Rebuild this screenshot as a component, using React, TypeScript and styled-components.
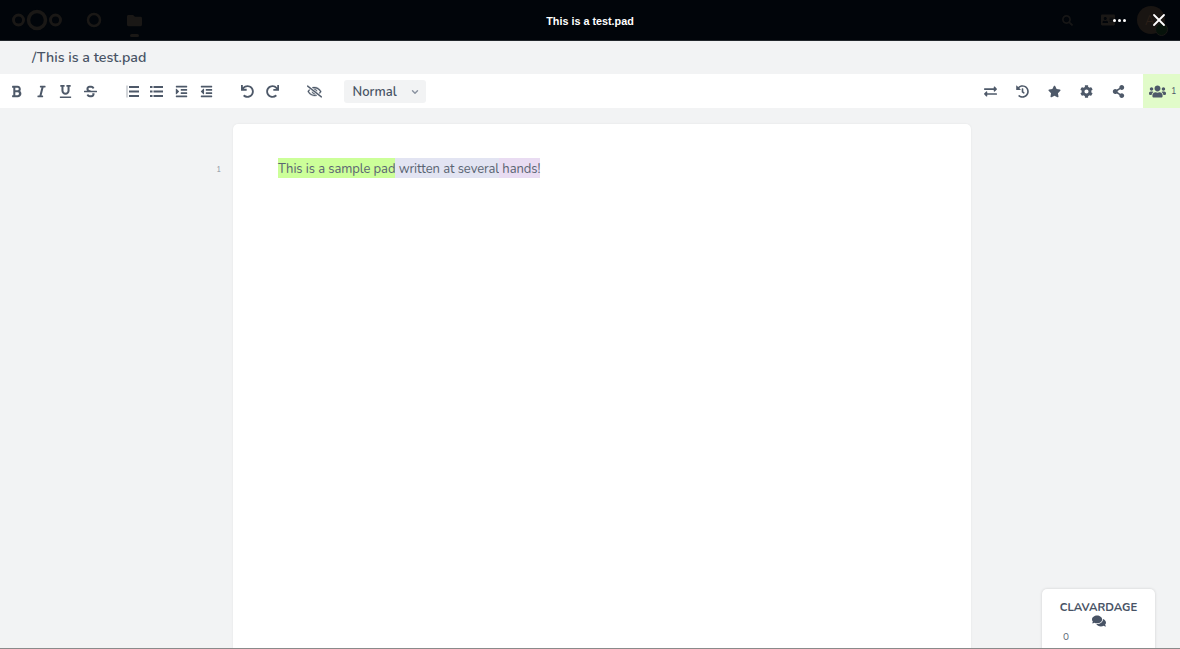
import React from 'react';
import styled, {createGlobalStyle} from "styled-components";
import {
    FaBold, FaItalic, FaUnderline, FaStrikethrough, FaIndent, FaOutdent,
    FaUndo, FaRedo, FaRegEyeSlash, FaExchangeAlt, FaHistory, FaStar, FaCog, FaShareAlt, FaUsers, FaComments,
    FaSearch, FaAddressCard, FaFolder,
} from "react-icons/fa";
import {FiChevronDown, FiX} from "react-icons/fi";

const GlobalStyle = createGlobalStyle`
    html, body {
        margin: 0;
        height: 100%;
        overflow: hidden;
        background: #f2f3f4;
        font-family: "Nunito", Lato, "Open Sans", sans-serif;
    }
`

const OrderedListIcon = () => (
    <svg width="13" height="13" viewBox="0 0 13 13" fill="currentColor">
        <rect x="3" y="1" width="10" height="2"/>
        <rect x="3" y="5.5" width="10" height="2"/>
        <rect x="3" y="10" width="10" height="2"/>
        <rect x="0.5" y="0.5" width="1" height="12" opacity="0.5"/>
    </svg>
);

const BulletListIcon = () => (
    <svg width="13" height="13" viewBox="0 0 13 13" fill="currentColor">
        <rect x="0" y="1" width="2.5" height="2"/>
        <rect x="0" y="5.5" width="2.5" height="2"/>
        <rect x="0" y="10" width="2.5" height="2"/>
        <rect x="3.5" y="1" width="9.5" height="2"/>
        <rect x="3.5" y="5.5" width="9.5" height="2"/>
        <rect x="3.5" y="10" width="9.5" height="2"/>
    </svg>
);

const App = () => {
    return (
        <Page>
            <GlobalStyle/>
            <TopBar>
                <TopLeft>
                    <svg width="50" height="24" viewBox="0 0 50 24" fill="none" stroke="#1a1816">
                        <circle cx="6.5" cy="12" r="5" strokeWidth="3"/>
                        <circle cx="25" cy="12" r="8.5" strokeWidth="3.5"/>
                        <circle cx="43.5" cy="12" r="5" strokeWidth="3"/>
                    </svg>
                    <DimApp>
                        <svg width="16" height="16" viewBox="0 0 16 16" fill="none" stroke="#1a1816">
                            <circle cx="8" cy="8" r="6" strokeWidth="2.5"/>
                        </svg>
                    </DimApp>
                    <DimApp $active>
                        <FaFolder size={15} color="#1a1816"/>
                    </DimApp>
                </TopLeft>
                <TopTitle>This is a test.pad</TopTitle>
                <TopRight>
                    <FaSearch size={11} color="#161616"/>
                    <DimCard><FaAddressCard size={14} color="#1a1816"/></DimCard>
                    <Dots>
                        <i/><i/><i/>
                    </Dots>
                    <Avatar>
                        <AvatarLetter>A</AvatarLetter>
                        <CloseIcon><FiX size={20} strokeWidth={2.2}/></CloseIcon>
                    </Avatar>
                </TopRight>
            </TopBar>
            <PathBar>/This is a test.pad</PathBar>
            <Toolbar>
                <ToolGroup>
                    <ToolButton><FaBold/></ToolButton>
                    <ToolButton><FaItalic/></ToolButton>
                    <ToolButton><FaUnderline/></ToolButton>
                    <ToolButton><FaStrikethrough/></ToolButton>
                </ToolGroup>
                <ToolGroup>
                    <ToolButton><OrderedListIcon/></ToolButton>
                    <ToolButton><BulletListIcon/></ToolButton>
                    <ToolButton><FaIndent/></ToolButton>
                    <ToolButton><FaOutdent/></ToolButton>
                </ToolGroup>
                <ToolGroup>
                    <ToolButton><FaUndo/></ToolButton>
                    <ToolButton><FaRedo/></ToolButton>
                </ToolGroup>
                <ToolGroup>
                    <EyeButton><FaRegEyeSlash/></EyeButton>
                </ToolGroup>
                <StyleSelect>
                    <span>Normal</span>
                    <FiChevronDown size={10} color="#8a92a0" strokeWidth={3.4}/>
                </StyleSelect>
                <RightTools>
                    <WideButton><FaExchangeAlt/></WideButton>
                    <WideButton><FaHistory/></WideButton>
                    <WideButton><FaStar/></WideButton>
                    <WideButton><FaCog/></WideButton>
                    <WideButton><FaShareAlt/></WideButton>
                    <UsersButton><FaUsers size={17}/><small>1</small></UsersButton>
                </RightTools>
            </Toolbar>
            <Workspace>
                <Gutter>1</Gutter>
                <Sheet>
                    <Line>
                        <Author $color="#ccff99">This is a sample pad</Author>
                        <Author $color="#e2e4f2"> written at several</Author>
                        <Author $color="#e9dcf2"> hands!</Author>
                    </Line>
                </Sheet>
                <ChatBox>
                    <ChatTitle>CLAVARDAGE</ChatTitle>
                    <FaComments size={14}/>
                    <ChatCount>0</ChatCount>
                </ChatBox>
            </Workspace>
        </Page>
    );
};

export default App;

const Page = styled.div`
    height: 649px;
    width: 1180px;
    display: flex;
    flex-direction: column;
    overflow: hidden;
    color: #485365;
    border-bottom: 1px solid #8a8a8a;
    box-sizing: border-box;
`
const TopBar = styled.header`
    height: 41px;
    flex: none;
    background: #01050a;
    display: grid;
    grid-template-columns: 1fr auto 1fr;
    align-items: center;
    border-bottom: 1px solid #22272c;
    box-sizing: border-box;
`
const TopLeft = styled.div`
    display: flex;
    align-items: center;
    padding-left: 12px;
`
const DimApp = styled.div<{ $active?: boolean }>`
    position: relative;
    width: 41px;
    display: flex;
    justify-content: center;
    margin-left: ${p => p.$active ? 0 : 11}px;

    &::after {
        content: "";
        display: ${p => p.$active ? "block" : "none"};
        position: absolute;
        left: 16px;
        bottom: -9px;
        width: 9px;
        height: 3px;
        border-radius: 2px;
        background: #1a1816;
    }
`
const TopTitle = styled.div`
    color: #fff;
    font-size: 10.8px;
    font-weight: 700;
    font-family: "Liberation Sans", sans-serif;
    padding-top: 1px;
`
const TopRight = styled.div`
    display: flex;
    align-items: center;
    justify-content: flex-end;
    padding-right: 15px;
`
const DimCard = styled.div`
    margin-left: 28px;
    display: flex;
`
const Dots = styled.div`
    display: flex;
    gap: 2px;
    margin-left: -2px;

    i {
        width: 3px;
        height: 3px;
        border-radius: 50%;
        background: #fff;
    }
`
const Avatar = styled.div`
    position: relative;
    width: 28px;
    height: 28px;
    margin-left: 11px;
    border-radius: 50%;
    background: #191512;
    display: flex;
    align-items: center;
    justify-content: center;

    &::after {
        content: "";
        position: absolute;
        right: -3px;
        bottom: -2px;
        width: 11px;
        height: 11px;
        border-radius: 50%;
        background: #06120a;
        border: 1px solid #1a1816;
    }
`
const AvatarLetter = styled.span`
    position: absolute;
    left: 8px;
    top: 6px;
    font-size: 13px;
    color: #2c2018;
`
const CloseIcon = styled.span`
    position: relative;
    z-index: 1;
    display: flex;
    color: #fff;
    margin-left: 16px;
`
const PathBar = styled.div`
    height: 33px;
    flex: none;
    box-sizing: border-box;
    padding: 0 0 1px 32px;
    display: flex;
    align-items: center;
    font-size: 14.2px;
    font-weight: 600;
    background: #f2f3f4;
`
const Toolbar = styled.div`
    height: 34px;
    flex: none;
    background: #fff;
    display: flex;
    align-items: center;
    padding-left: 4px;
`
const ToolGroup = styled.div`
    display: flex;
    align-items: center;
    margin-right: 17px;
`
const ToolButton = styled.button`
    width: 24.7px;
    height: 34px;
    padding: 0;
    border: 0;
    background: none;
    color: #4e5969;
    display: flex;
    align-items: center;
    justify-content: center;
    font-size: 13px;
`
const EyeButton = styled(ToolButton)`
    font-size: 15px;

    svg {
        stroke: currentColor;
        stroke-width: 14px;
    }
`
const StyleSelect = styled.div`
    width: 82px;
    height: 23px;
    box-sizing: border-box;
    padding: 1px 6px 0 9px;
    border-radius: 3px;
    background: #f2f3f4;
    display: flex;
    align-items: center;
    justify-content: space-between;
    font-size: 13px;
    font-weight: 600;
`
const RightTools = styled.div`
    margin-left: auto;
    height: 100%;
    display: flex;
    align-items: center;
`
const WideButton = styled(ToolButton)`
    width: 32px;
`
const UsersButton = styled.div`
    width: 37px;
    height: 100%;
    margin-left: 9px;
    box-sizing: border-box;
    padding-left: 6px;
    background: #e1fbc9;
    display: flex;
    align-items: center;
    gap: 5px;
    color: #4e5969;

    small {
        font-size: 9px;
    }
`
const Workspace = styled.main`
    position: relative;
    flex: 1;
    min-height: 0;
    display: flex;
    padding-top: 16px;
    overflow: hidden;
`
const Gutter = styled.div`
    width: 221px;
    flex: none;
    padding-top: 40px;
    text-align: right;
    font-size: 8px;
    color: #8b93a0;
`
const Sheet = styled.div`
    width: 738px;
    margin-left: 12px;
    height: 600px;
    box-sizing: border-box;
    padding: 34px 45px;
    background: #fff;
    border-radius: 5px;
    box-shadow: 0 0 2px rgba(0, 0, 0, 0.08);
`
const Line = styled.div`
    font-size: 13px;
    letter-spacing: -0.08px;
    line-height: 22px;
    height: 20px;
    white-space: pre;
    color: #5a6472;
`
const Author = styled.span<{ $color: string }>`
    background: ${p => p.$color};
    display: inline-block;
    height: 20px;
    vertical-align: top;
`
const ChatBox = styled.aside`
    position: absolute;
    left: 1042px;
    top: 481px;
    width: 113px;
    height: 80px;
    box-sizing: border-box;
    padding-top: 11px;
    background: #fff;
    border-radius: 5px;
    box-shadow: 0 0 3px rgba(0, 0, 0, 0.15);
    display: flex;
    flex-direction: column;
    align-items: center;
`
const ChatTitle = styled.div`
    font-size: 11.4px;
    font-weight: 700;
    line-height: 14px;
`
const ChatCount = styled.div`
    align-self: flex-start;
    margin: 2px 0 0 21px;
    font-size: 10px;
    color: #5a6472;
`
